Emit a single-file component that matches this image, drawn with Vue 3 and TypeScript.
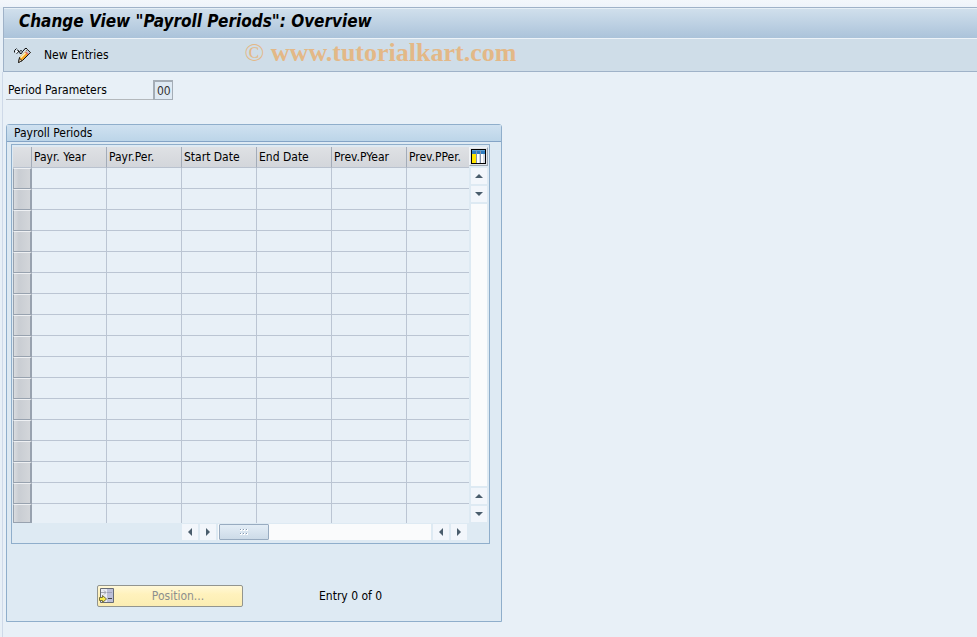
<script setup lang="ts">
import { ref } from 'vue'

const columns: string[] = ['Payr. Year', 'Payr.Per.', 'Start Date', 'End Date', 'Prev.PYear', 'Prev.PPer.']
const rowCount = 17
const parameter = ref('00')
</script>

<template>
  <div class="screen">
    <header class="head">
      <h1 class="title">Change View "Payroll Periods": Overview</h1>
      <div class="toolbar">
        <button class="tool" type="button" aria-label="Display / Change">
          <svg width="18" height="17" viewBox="0 0 18 17">
            <path d="M.5 5.500V3.500l2-2M2.500 6.500 4.500 5V3.500L3 3M5.500 4.500 7 3.500 8.500 4.500 7.500 6.500 6 6.500zM8.500 4.500 10 3l1-1.500h2" fill="none" stroke="#111" />
            <path d="M1.500 5 3 3.500 4 4.500 2.500 6z" fill="#fff" />
            <path d="M13.500 2.500 16.500 5.500 8.500 13.500 4.500 15.500 5.500 10.500z" fill="#f8a61f" stroke="#111" />
            <path d="M13 4 6.500 10.500" stroke="#ffeeb0" stroke-width="2" />
            <path d="M12 4.500 13.500 3 16 5.500 14.500 7z" fill="#b9c3e0" />
            <path d="M11 5.500 12 4.500 14.500 7 13.500 8z" fill="#e46a5e" />
            <path d="M5.500 11.500 8 13.500 4.500 15.500z" fill="#ffe7c9" stroke="#111" stroke-width=".7" />
          </svg>
        </button>
        <button class="tool" type="button">New Entries</button>
        <span class="mark"><span class="copy">©</span> www.tutorialkart.com</span>
      </div>
    </header>

    <main class="body">
      <div class="param">
        <label for="param">Period Parameters</label>
        <input id="param" v-model="parameter" type="text" maxlength="2" />
      </div>

      <section class="group">
        <h2 class="group-title">Payroll Periods</h2>
        <div class="frame">
          <div class="grid">
            <table>
              <thead>
                <tr>
                  <th class="sel"></th>
                  <th v-for="(c, i) in columns" :key="c" :class="{ last: i === columns.length - 1 }">{{ c }}</th>
                </tr>
              </thead>
              <tbody>
                <tr v-for="r in rowCount" :key="r">
                  <td class="sel"></td>
                  <td v-for="c in columns" :key="c"></td>
                </tr>
              </tbody>
            </table>
            <div class="vbar">
              <button class="config" type="button" aria-label="Configuration">
                <svg width="15" height="15" viewBox="0 0 15 15" shape-rendering="crispEdges">
                  <path d="M0 0h15v15H0z" fill="#000" />
                  <path d="M1 1h13v13H1z" fill="#d3d8e2" />
                  <path d="M1 1h13v4H1z" fill="#2f7cc0" />
                  <path d="M1 1h13v1H1z" fill="#5fa2d6" />
                  <path d="M1 5h4v9H1z" fill="#ffe500" />
                  <path d="M5 2h1v12H5zM9 2h1v12H9z" fill="#8292ab" />
                  <path d="M6 5h2v9H6zM10 5h2v9h-2z" fill="#fff" />
                </svg>
              </button>
              <button class="arrow" type="button" aria-label="Scroll up"><svg width="10" height="6" viewBox="0 0 10 6"><path d="M1 5 5 1l4 4z" /></svg></button>
              <button class="arrow" type="button" aria-label="Page down"><svg width="10" height="6" viewBox="0 0 10 6"><path d="M1 1h8L5 5z" /></svg></button>
              <div class="vtrack"></div>
              <button class="arrow" type="button" aria-label="Page up"><svg width="10" height="6" viewBox="0 0 10 6"><path d="M1 5 5 1l4 4z" /></svg></button>
              <button class="arrow" type="button" aria-label="Scroll down"><svg width="10" height="6" viewBox="0 0 10 6"><path d="M1 1h8L5 5z" /></svg></button>
            </div>
          </div>
          <div class="hbar">
            <button class="arrow" type="button" aria-label="Scroll left"><svg width="6" height="10" viewBox="0 0 6 10"><path d="M5 1v8L1 5z" /></svg></button>
            <button class="arrow" type="button" aria-label="Page right"><svg width="6" height="10" viewBox="0 0 6 10"><path d="M1 1v8l4-4z" /></svg></button>
            <div class="htrack">
              <div class="thumb">
                <svg width="8" height="6" viewBox="0 0 8 6" shape-rendering="crispEdges">
                  <path d="M0 0h2v2H0zM3 0h2v2H3zM6 0h2v2H6zM0 4h2v2H0zM3 4h2v2H3zM6 4h2v2H6z" fill="#fff" />
                  <path d="M0 0h1v1H0zM3 0h1v1H3zM6 0h1v1H6zM0 4h1v1H0zM3 4h1v1H3zM6 4h1v1H6z" fill="#8497ad" />
                </svg>
              </div>
            </div>
            <button class="arrow" type="button" aria-label="Page left"><svg width="6" height="10" viewBox="0 0 6 10"><path d="M5 1v8L1 5z" /></svg></button>
            <button class="arrow" type="button" aria-label="Scroll right"><svg width="6" height="10" viewBox="0 0 6 10"><path d="M1 1v8l4-4z" /></svg></button>
          </div>
        </div>
        <footer class="foot">
          <button class="position" type="button" disabled>
            <svg width="16" height="16" viewBox="0 0 16 16">
              <path d="M1.500 .5h13v14h-13z" fill="#e9ebf3" stroke="#666b75" />
              <path d="M8 1h6v13H8z" fill="#bcbfd8" />
              <path d="M2 4.500h5M5 2.500l2 2-2 2" fill="none" stroke="#a3a5b0" />
              <path d="M8 4.500h5" stroke="#9ea1b8" />
              <path d="M9 10.500h4" stroke="#444" />
              <path d="M.5 9.500h3v-2l4 3.500-4 3.500v-2h-3z" fill="#f7ea4a" stroke="#77713a" />
            </svg>
            <span>Position...</span>
          </button>
          <span>Entry 0 of 0</span>
        </footer>
      </section>
    </main>
  </div>
</template>

<style>
body {
  background: #e8f0f7;
}
</style>

<style scoped>
.screen {
  box-sizing: border-box;
  min-height: 100vh;
  padding: 7px 0 0 2px;
  background: linear-gradient(#f3f7fb, #eef3fa) 0 0 / 100% 7px no-repeat, #e8f0f7;
  color: #000;
  font: 12px/16px "DejaVu Sans Condensed", "DejaVu Sans", sans-serif;
  font-stretch: condensed;
}
* {
  box-sizing: border-box;
}
button {
  padding: 0;
  border: 0;
  background: none;
  color: inherit;
  font: inherit;
}
svg {
  display: block;
}
.head {
  margin-left: 1px;
  border: 1px solid #9fb2c8;
  border-right: 0;
  background: #cfdde8;
}
.title {
  height: 31px;
  margin: 0;
  padding: 0 15px;
  border-top: 1px solid #e6eff6;
  border-bottom: 1px solid #edf3f8;
  background: linear-gradient(#d0dfec, #abc3da);
  font-size: 17px;
  font-style: italic;
  font-weight: bold;
  line-height: 25px;
}
.toolbar {
  display: flex;
  align-items: center;
  height: 32px;
  padding: 0 10px;
  gap: 12px;
}
.mark {
  margin-left: 124px;
  color: #e3b887;
  font: bold 26px/28px "Liberation Serif", serif;
  white-space: nowrap;
}
.toolbar .mark {
  padding-bottom: 5px;
}
.copy {
  font-weight: normal;
}
.body {
  padding: 8px 4px 15px 3px;
  border-left: 1px solid #ced9e8;
}
.param {
  display: flex;
  align-items: flex-end;
}
.param label {
  width: 147px;
  padding-left: 2px;
  border-bottom: 1px solid #b3b8bc;
  line-height: 18px;
}
.param input {
  width: 20px;
  height: 20px;
  padding: 0 0 0 2px;
  border: 2px solid #a4adb6;
  border-right-width: 1px;
  border-bottom-width: 1px;
  border-radius: 0;
  background: #dfeaf4;
  color: #333;
  font: inherit;
}
.group {
  width: max-content;
  margin-top: 24px;
  border: 1px solid #8faecb;
  border-radius: 3px 3px 0 0;
  background: #deeaf3;
}
.group-title {
  height: 17px;
  margin: 0;
  padding-left: 7px;
  border-bottom: 1px solid #84a4c6;
  background: linear-gradient(#cfe1f0, #bcd5e8);
  font-size: 12px;
  font-weight: normal;
  line-height: 16px;
}
.frame {
  margin: 2px 11px 0 4px;
  padding: 2px 2px 3px 1px;
  border: 1px solid #8faecb;
}
.grid {
  display: flex;
  gap: 1px;
}
table {
  border-collapse: separate;
  border-spacing: 0;
  table-layout: fixed;
  width: 456px;
}
th {
  width: 75px;
  height: 21px;
  padding: 0 0 0 2px;
  border-right: 1px solid #a3acb9;
  border-bottom: 1px solid #b9c2cf;
  background: linear-gradient(#dfe1e4, #d3d6db);
  font-weight: normal;
  text-align: left;
  white-space: nowrap;
}
td {
  height: 21px;
  padding: 0;
  border-right: 1px solid #bbc5d3;
  border-bottom: 1px solid #bbc5d3;
  background: #e8f0f7;
}
.sel {
  width: 19px;
}
th.last {
  width: 62px;
}
th:last-child,
td:last-child {
  border-right: 0;
}
td.sel {
  border: 1px solid #98a2af;
  border-right-width: 2px;
  border-top-color: #eef0f3;
  background: linear-gradient(90deg, #d9dce0, #c9cdd3 30%, #d3d6da);
}
tbody tr:last-child td {
  height: 19px;
}
tbody tr:last-child td:not(.sel) {
  border-bottom: 0;
}
.vbar {
  display: flex;
  flex-direction: column;
  align-items: center;
  gap: 2px;
  width: 17px;
  padding-bottom: 1px;
}
.config {
  padding: 1px;
  border: 1px solid #f0f3f6;
  border-right-color: #9aa5b1;
  border-bottom-color: #9aa5b1;
  background: #dfe3e8;
}
.arrow {
  display: grid;
  place-items: center;
  flex: none;
  width: 16px;
  height: 16px;
  background: #f2f6fb;
}
.arrow path {
  fill: #4a5d6c;
}
.vtrack {
  flex: 1;
  width: 16px;
  background: #fafbfc;
}
.hbar {
  display: flex;
  gap: 2px;
  margin: 1px 20px 0 169px;
}
.htrack {
  flex: 1;
  padding: 0 1px;
  background: #fafbfc;
}
.thumb {
  display: grid;
  place-items: center;
  width: 50px;
  height: 16px;
  border: 1px solid #98abc0;
  border-radius: 1px;
  background: linear-gradient(#e3edf6, #cddbe8);
}
.foot {
  display: flex;
  align-items: center;
  gap: 76px;
  padding: 41px 90px 14px;
}
.position {
  display: flex;
  align-items: center;
  width: 146px;
  height: 22px;
  padding: 0 1px;
  border: 1px solid #92958f;
  border-radius: 2px;
  background: linear-gradient(#fff8d8, #fff2bd 40%, #fbedb2);
  color: #8d8f8e;
}
.position span {
  flex: 1;
}
</style>
